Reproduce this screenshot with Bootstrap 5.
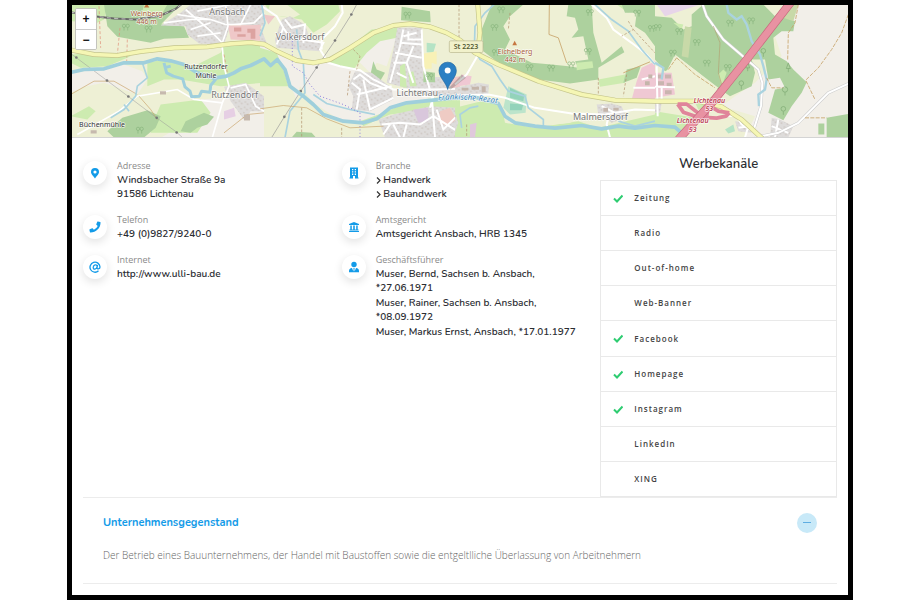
<!DOCTYPE html>
<html lang="de">
<head>
<meta charset="utf-8">
<meta name="viewport" content="width=device-width, initial-scale=1">
<title>Firmenprofil</title>
<link href="https://cdn.jsdelivr.net/npm/bootstrap@5.3.0/dist/css/bootstrap.min.css" rel="stylesheet">
<style>
body{font-family:"Open Sans","Noto Sans",sans-serif;color:#2b2d32;background:#fff}
.frame{max-width:786px;min-height:100vh;border:5px solid #000;background:#fff}
.map-box{height:133px;border-bottom:1px solid #d4d4d4}
.map-box svg.map-art{width:100%;height:100%}
.zoom-box{top:3px;left:3px;border:1px solid #c4c4bd;border-radius:2px;background:#fff}
.zoom-box button{width:20px;height:20px;border:0;background:#fff;font:700 12px/20px "Liberation Sans",sans-serif;color:#111;padding:0}
.zoom-box button+button{border-top:1px solid #ccc}
.body-pad{padding:0 11px}
.facts{--bs-gutter-x:22px}
.fact-col{padding-top:21px}
.fact-list{gap:12px}
.fact{gap:10px}
.bubble{width:24px;height:24px;margin-top:2px;background:#fff;box-shadow:0 3px 10px rgba(0,0,0,.12)}
.bubble svg{width:12px;height:12px;fill:#139be8}
.fact dt{font-size:9px;line-height:14px;font-weight:400;color:#8a8a8a}
.fact dd{font:600 10px/14px Nunito,"Open Sans",sans-serif;margin:0 0 1px}
.fact dd:last-child{margin-bottom:0}
.fact a{color:inherit;text-decoration:none}
.chev{width:5px;height:7px;fill:none;stroke:#333;stroke-width:1.2}
.side-title{font:600 13px/18px Nunito,"Open Sans",sans-serif;margin:17px 0 7px}
.channels{--bs-list-group-border-color:#e9e9e9;--bs-list-group-border-radius:0}
.channels li{height:35px;padding:0 12px;gap:11px;font-size:8px;font-weight:600;color:#444;letter-spacing:1px}
.channels li:nth-child(4n+1){height:36px}
.channels li:last-child{height:35px}
.channels svg{width:10px;height:9px;fill:none;stroke:#2ecc71;stroke-width:2}
.purpose{border:solid #ececec;border-width:1px 0;padding:15px 20px 20px}
.purpose h2{font:700 11px/20px Nunito,"Open Sans",sans-serif;color:#139be8}
.purpose p{font-size:10px;font-weight:300;line-height:16px;color:#666;margin:14px 0 0}
.fold{width:20px;height:20px;background:#c8e9f8;color:#139be8}
.fold svg{width:8px;height:2px;fill:#5dade2}
</style>
<script src="https://cdn.jsdelivr.net/npm/bootstrap@5.3.0/dist/js/bootstrap.bundle.min.js"></script>
</head>
<body>
<main class="frame mx-auto">
<section class="map-box position-relative overflow-hidden" aria-label="Karte">
<svg class="map-art d-block" viewBox="216 15 2328 399" preserveAspectRatio="xMidYMid slice">
<defs>
<pattern id="houses" width="18" height="16" patternUnits="userSpaceOnUse" patternTransform="rotate(8)"><rect width="18" height="16" fill="#dedcdb"/><rect x="3" y="3" width="5" height="4" fill="#d0c9c4"/><rect x="11" y="8" width="5" height="5" fill="#d0c9c4"/></pattern>
<g id="tree" fill="none" stroke="#86b37c" stroke-width="2"><circle cx="-5" cy="-5" r="5"/><circle cx="6" cy="-5" r="5"/><path d="M-5 0V9M6 0V9"/></g>
</defs>
<rect x="200" y="0" width="2360" height="430" fill="#eef0d5"/>
<!-- west -->
<g transform="translate(192 0)">
<path fill="#f2efe9" d="M20 222L180 195 235 215 250 240 220 285 120 250 60 262 20 280zM400 300L600 290V415H290L350 380 400 370z"/>
<path fill="#cdebb0" d="M20 15H130L120 60 100 70 20 65zM20 165L110 160 200 170 130 200 50 205 20 190zM250 190L300 180 380 205 470 160 480 135 600 135V250L470 260 350 240 300 240 250 260zM290 315L410 300 440 340 400 400H260L275 350zM130 45L290 60 300 80 190 80z"/>
<path fill="#add19e" d="M120 15H350L290 75 360 80 375 115 300 118 260 130 160 112 130 80zM175 355L250 332 290 350 275 385 240 414H150L130 395zM350 395L365 365 420 340 450 352 430 375 400 385 380 400z"/>
<path fill="#cdebb0" d="M240 15L310 15 290 50 230 60zM75 320L95 335 70 360 20 350z"/>
<path fill="url(#houses)" d="M350 40L380 15H600V80L500 75 480 135 405 132 370 105 365 80 290 78zM480 262L545 250 600 290V335H560L540 360 500 305z"/>
<path fill="#efc8c8" d="M492 78L590 76 600 124 500 120z"/><path fill="#dca3a0" d="M510 84h22v12h-22zM550 88h24v30h-14V100h-10zM520 104h25v8h-25z"/>
<path fill="#e6cfe4" d="M480 335L510 325 515 350 480 360z"/>
<path fill="none" stroke="#fff" stroke-width="5" d="M300 70L380 60 440 60 485 75M340 45L440 60M365 30L440 95 475 130M380 90L440 70M400 110L470 100M400 35L500 15M485 15L492 80 474 133 480 200 495 260 475 310 445 414M510 75L570 70 600 40M485 75L530 75 560 15M500 265L545 255 575 320 600 335M475 310L390 300 340 270 220 290 165 335 40 405"/>
<path fill="none" stroke="#c8a36a" stroke-width="2" d="M20 285L90 245 150 245 220 285M225 290L260 330 280 360M480 400L550 345 600 340"/>
<path fill="none" stroke="#df8d76" stroke-width="2" stroke-dasharray="9 6" d="M105 20L110 145M168 85L160 165M190 120L188 190M480 165L492 230"/>
<path fill="none" stroke="#aad3df" stroke-width="5" d="M235 190L250 235 220 260 215 290 180 330 140 355M180 315L195 335"/>
<path fill="none" stroke="#999" stroke-width="1.5" d="M20 162L129 243 193 291 278 355 338 398 355 414"/>
<path fill="none" stroke="#666" stroke-width="6" d="M20 38L90 50 150 57 215 60 290 48 335 28 355 12"/><path fill="none" stroke="#eee" stroke-width="2" stroke-dasharray="12 10" d="M20 38L90 50 150 57 215 60 290 48 335 28 355 12"/>
<g fill="#777"><circle cx="37" cy="174" r="4"/><circle cx="129" cy="243" r="4"/><circle cx="193" cy="291" r="4"/><circle cx="278" cy="355" r="4"/><circle cx="338" cy="399" r="4"/></g>
<path fill="#c6b9ae" d="M288 275h18v10h-18zM80 392h18v10H80zM540 345h18v18h-18z"/>
<use href="#tree" x="185" y="84"/><use href="#tree" x="253" y="90"/><use href="#tree" x="227" y="393"/>
</g>
<!-- center -->
<g transform="translate(780 0)">
<path fill="#f2efe9" d="M0 135L70 160 120 190 200 190 300 210 360 260 500 290 510 310 400 320 340 370 240 362 160 310 120 260 110 300 60 190 0 170zM290 120L410 80V110L380 200 350 190 330 220 300 190z"/>
<path fill="#cdebb0" d="M15 15H235L240 35 200 75 160 100 125 60 60 50 25 30zM0 145L50 160 70 210 85 260 0 260zM335 90L415 85 410 115 360 125 320 160 280 210 200 190 240 165zM440 310L600 285V414H530L510 330 390 345 310 380 300 365 370 340z"/>
<path fill="#eef0d5" d="M30 15L80 15 120 45 100 55 20 45z"/>
<path fill="#add19e" d="M425 22L510 35 512 68 423 62zM340 185L350 210 375 220 360 245 330 232zM95 414L110 397 155 400 168 414z"/>
<path fill="url(#houses)" d="M65 60L90 50 135 75 150 120 185 125 180 155 50 145 45 120zM412 85L485 85 490 235 555 232 600 240V285L500 290 425 262 380 250 400 150zM285 215L335 220 395 265 400 300 330 335 275 330 280 290 265 260zM355 360L400 345 510 320 590 325 600 414H375zM0 80L20 130 0 140z"/>
<path fill="#cdebb0" d="M420 200L435 190 440 265 420 260zM445 220L460 215 470 260 450 260z"/>
<path fill="#b5e3c5" d="M500 130L528 133 520 160 500 158z"/><path fill="#f8f1b6" d="M492 162L530 155V195L515 190V208H490z"/>
<path fill="#add19e" d="M491 215L525 220V248H490z"/>
<path fill="#d9c7dc" d="M460 330L505 325V365L475 370z"/><path fill="#efcbc4" d="M540 335L570 325 590 360 560 380 535 365z"/>
<path fill="#efc8c8" d="M10 45L45 50 25 75zM565 235L600 230V275L575 270z"/>
<path fill="none" stroke="#fff" stroke-width="6" d="M5 20L50 50 70 85 90 115 190 130 180 150 205 190 240 200 300 212 340 240 400 270 520 270 600 268M245 15L248 40 225 80 185 120V150M75 60L95 85 135 75 130 130M70 85L50 135M430 90L420 140 390 250M420 130L485 135M445 95V120H485M485 90L490 200 515 290 525 414M405 160L485 175M400 190L440 190 460 250M430 110L470 100M460 140L440 190M410 220L440 235M280 240L300 225 330 250 380 270M275 250L300 270 290 330M290 285L395 260M310 240L330 330 400 295M365 375L420 370 480 375 520 350M370 405L390 375M400 375L420 414M440 375L430 414M530 330L550 390 600 340M520 350L600 400M485 290L520 290 510 325"/>
<path fill="none" stroke="#aad3df" stroke-width="5" d="M5 15L15 70 0 110M110 90L115 150 130 190 135 280 90 335 75 414M160 285L200 312 270 330 320 340 345 345"/>
<path fill="none" stroke="#8f80df" stroke-width="3" stroke-dasharray="3 7" d="M97 125V200L130 220 150 255 180 290 250 315 300 340V414"/>
<path fill="none" stroke="#c8a36a" stroke-width="2" d="M0 328L70 318 140 325 200 358 270 385 370 380"/>
<path fill="none" stroke="#b0906a" stroke-width="2" stroke-dasharray="8 5" d="M125 325V414M245 385V414M280 150L300 170 290 210M270 215L262 290"/>
<path fill="none" stroke="#999" stroke-width="2" d="M290 15L274 45 225 123 170 204 122 275 73 352 35 414"/>
<g fill="#777"><circle cx="274" cy="45" r="4"/><circle cx="225" cy="123" r="4"/><circle cx="170" cy="204" r="4"/><circle cx="122" cy="275" r="4"/><circle cx="73" cy="352" r="4"/></g>
<use href="#tree" x="442" y="48"/><use href="#tree" x="508" y="232"/>
</g>
<!-- east of the centre -->
<g transform="translate(1365 0)">
<path fill="#cdebb0" d="M0 325L100 300 140 320 150 370 240 385 370 365 430 385 600 345V414H0zM430 240L510 225 510 250 435 262zM485 15L525 15 520 40z"/>
<path fill="#eef0d5" d="M150 345L220 320 350 370 240 380z"/>
<path fill="#add19e" d="M110 15H205L165 50 145 80 165 120 150 150 230 190 290 195 340 200 370 205 360 185 400 180 385 110 350 115 370 90 360 55 335 50 340 15H410L415 100 440 190 500 140 508 158 430 205 430 240 345 252 250 240 130 190 85 155 80 90zM500 15H600V140L570 100 540 80 545 40 510 40zM515 210L557 200 545 235 505 250z"/>
<path fill="#cdebb0" d="M365 190L412 185 415 205 365 212z"/>
<path fill="#bce4cb" d="M145 325L160 260 215 285 212 340 165 345z"/><path fill="#93d3ba" d="M165 265L208 285 205 305 165 295zM165 312L205 315 200 332 165 332z"/>
<path fill="url(#houses)" d="M0 265L70 250 102 255 100 285 0 290zM425 315L470 312 500 320 515 355 470 370 430 345zM0 340L10 370 0 400z"/>
<path fill="#efc8d3" d="M20 225L50 230 45 255 10 260zM560 205L600 185V300H530L545 245z"/>
<path fill="#e0c8dc" d="M45 375L65 370 60 414H45z"/>
<path fill="none" stroke="#fff" stroke-width="6" d="M0 255L35 225 68 168M0 288L100 285 150 295 240 325 350 342 450 345 540 330 600 332M410 15L455 55 475 90 530 130 575 165 600 195M535 265L600 265M560 240L600 230M440 320L480 340M462 345L455 375 465 414"/>
<path fill="none" stroke="#aad3df" stroke-width="5" d="M118 15L90 40 60 80 58 150 75 180 110 200 135 240 160 275 210 290 220 325 265 360V380M420 15L470 60 520 95 560 150 600 195M20 385L15 345 45 325 70 320M490 365L540 380 600 365"/>
<path fill="none" stroke="#c8a36a" stroke-width="2.5" d="M283 15L282 105 310 115 335 190M505 220L585 187"/>
<path fill="none" stroke="#b0906a" stroke-width="2" stroke-dasharray="8 5" d="M12 15V120M520 65L535 90 500 110M535 90L600 160M515 225L505 290M430 235L430 300M165 40L160 90M35 375V414"/>
<path fill="#c4b5aa" d="M20 265h20v8H20zM50 262h22v9H50zM80 260h12v18H80zM580 225h12v12h-12zM570 245h14v12h-14zM445 325h14v12h-14zM475 325h16v8h-16z"/>
<path fill="#c67641" d="M172 137L179 124 186 137z"/>
<use href="#tree" x="138" y="32"/><use href="#tree" x="118" y="85"/><use href="#tree" x="122" y="160"/><use href="#tree" x="223" y="205"/><use href="#tree" x="288" y="207"/><use href="#tree" x="348" y="197"/><use href="#tree" x="398" y="157"/><use href="#tree" x="546" y="42"/><use href="#tree" x="404" y="40"/><use href="#tree" x="590" y="88"/>
</g>
<!-- east -->
<g transform="translate(1965 0)">
<path fill="#f2efe9" d="M415 15H600V414H270L300 350 200 320 240 290 300 250 380 170 360 110 380 90 400 95z"/>
<path fill="#e7d5e9" d="M5 15H135L30 50z"/>
<path fill="#cdebb0" d="M0 335L120 355 80 414H0z"/>
<path fill="#add19e" d="M0 50L50 55 85 90 110 80 110 45 145 15H400L380 50 420 65 415 95 380 95 355 115 360 165 395 185 415 210 455 248 440 280 410 320 385 362 340 340 360 270 390 265 375 235 340 240 330 180 290 180 300 220 290 260 225 290 210 280 180 300 190 270 130 220 65 170 60 200 30 215 0 180zM515 355L580 343V414H515zM490 372H508V405H490z"/>
<path fill="#eef0d5" d="M325 15H395L360 50zM60 165L190 265 140 300 20 290 35 215z"/>
<path fill="#c8d9a8" d="M90 80L110 85 100 175 80 170zM385 55L400 15H430L415 65z"/>
<path fill="#cdebb0" d="M190 225L205 210 215 220 200 260zM55 70L85 75 80 90zM120 310L175 290 180 330 130 330z"/>
<path fill="#efc8d3" d="M0 220L50 220 60 285 0 295z"/>
<path fill="#c9b4af" d="M5 225h14v12H5zM30 225h18v12H30zM5 245h22v12H5zM35 250h15v12H35zM30 272h20v12H30z"/>
<path fill="url(#houses)" d="M350 355L375 360 415 380 400 414H345zM240 365L275 370 290 400 250 395zM0 310H20L15 340H0z"/>
<path fill="#b5e3c5" d="M210 390L235 375 240 395 220 402z"/>
<path fill="none" stroke="#fff" stroke-width="6" d="M0 262L60 263M5 200L8 350M20 263V300M210 348L245 350 260 375 310 405M250 385L280 380 270 414M350 380L400 400M370 360L360 414"/>
<path fill="none" stroke="#ccc" stroke-width="9" d="M143 15L155 50 205 120 275 180 310 210 322 250 318 320 298 385M300 414L370 400 430 370 480 320 520 280 590 248"/>
<path fill="none" stroke="#fff" stroke-width="6" d="M143 15L155 50 205 120 275 180 310 210 322 250 318 320 298 385M300 414L370 400 430 370 480 320 520 280 590 248"/>
<path fill="none" stroke="#aad3df" stroke-width="7" d="M215 15L220 40 245 60 260 50 275 75 290 125 315 165 325 200 335 240 330 270 310 285 312 320M0 190L25 205 20 240"/>
<path fill="none" stroke="#c8a36a" stroke-width="2.5" stroke-dasharray="12 4" d="M430 15L420 70 400 100 398 180M580 45L560 100 530 150 490 205 452 242 480 300M65 175L120 225 180 265M335 235L350 265 385 265M450 355H515M40 210L65 175"/>
<path fill="none" stroke="#b2a173" stroke-width="2" d="M175 80L195 130 190 220 200 255 180 295"/>
<use href="#tree" x="8" y="85"/><use href="#tree" x="72" y="97"/><use href="#tree" x="125" y="130"/><use href="#tree" x="53" y="162"/><use href="#tree" x="155" y="192"/><use href="#tree" x="218" y="205"/><use href="#tree" x="288" y="65"/><use href="#tree" x="225" y="72"/>
<g fill="none" stroke="#7ba871" stroke-width="2"><path d="M325 161V172M400 207V218M259 259V270M390 278V288M385 336V346M278 205V215"/><circle cx="325" cy="154" r="7"/><path d="M400 190L394 207H406zM278 188L272 205H284z"/><circle cx="259" cy="251" r="7"/><circle cx="390" cy="270" r="8"/><circle cx="385" cy="328" r="7"/></g>
</g>
<!-- rivers and main roads -->
<g fill="none" stroke="#9fcfdc" stroke-width="11" stroke-linejoin="round">
<path d="M212 219L252 210 312 208 372 190 432 190 472 178 512 184 552 195 592 220 642 236 680 230 702 220 722 208 752 198 792 178 812 198 832 180 855 210 870 260 910 290 940 315 970 345 1030 365 1090 370 1130 358 1170 325 1220 310 1300 302 1365 295 1420 292 1495 312 1515 350 1545 370 1605 380 1665 386 1745 378 1805 388 1855 380 1905 386 1965 378 2025 383 2050 405"/>
<path stroke-width="9" d="M492 190L500 220 520 230 548 238 555 262 570 275 575 292 598 290 605 275 630 278 632 258 648 238M492 205L512 200"/>
</g>
<g fill="none" stroke-linejoin="round">
<path stroke="#c5c58b" stroke-width="15" d="M210 151L282 165 352 168 422 156 522 145 622 142 692 133 752 129 792 134 830 155 890 183 940 190 990 180 1050 145 1120 100 1180 78 1230 73 1290 82 1340 100 1380 122 1425 160 1495 195 1615 245 1745 285 1845 302 1965 305 2095 305 2165 322 2225 360 2290 420M1433 12L1440 100 1433 160"/>
<path stroke="#f5f6b4" stroke-width="11" d="M210 151L282 165 352 168 422 156 522 145 622 142 692 133 752 129 792 134 830 155 890 183 940 190 990 180 1050 145 1120 100 1180 78 1230 73 1290 82 1340 100 1380 122 1425 160 1495 195 1615 245 1745 285 1845 302 1965 305 2095 305 2165 322 2225 360 2290 420M1433 12L1440 100 1433 160"/>
<path stroke="#e0849a" stroke-width="11" d="M2033 314L2050 338 2090 352 2150 356 2178 350 2188 340M2033 314H2060L2100 345M2125 320L2120 350M2130 320L2155 335 2188 340"/>
<path stroke="#c76a7e" stroke-width="25" d="M2375 5L2240 180 2140 305 2035 420"/><path stroke="#e892a2" stroke-width="21" d="M2375 5L2240 180 2140 305 2035 420"/>
</g>
<g font-family="'Noto Sans',sans-serif" text-anchor="middle" paint-order="stroke" stroke="#fff" stroke-opacity=".75" stroke-width="4" stroke-linejoin="round">
<g font-size="27" fill="#777"><text x="682" y="45">Ansbach</text><text x="900" y="121">Volkersdorf</text><text x="704" y="295">Rutzendorf</text><text x="1252" y="290">Lichtenau</text><text x="1801" y="360">Malmersdorf</text></g>
<g font-size="21" fill="#333"><text x="618" y="209">Rutzendorfer</text><text x="618" y="236">Mühle</text><text x="306" y="382">Büchenmühle</text></g>
<g font-size="21" fill="#a85c38"><text x="440" y="49">Weinberg</text><text x="440" y="73">446 m</text><text x="1545" y="162">Eichelberg</text><text x="1545" y="186">442 m</text></g>
<g font-size="21" font-style="italic" font-weight="600" fill="#bd3f55"><text x="2128" y="310">Lichtenau</text><text x="2128" y="334">53</text><text x="2078" y="371">Lichtenau</text><text x="2078" y="396">53</text></g>
<path id="riverline" d="M1315 302Q1410 294 1535 320" fill="none" stroke="none"/>
<text font-size="24" font-style="italic" fill="#3e86bb" text-anchor="start"><textPath href="#riverline">Fränkische Rezat</textPath></text>
</g>
<path fill="#c67641" d="M432 24L440 12 448 24z"/>
<rect x="1348" y="124" width="101" height="35" rx="4" fill="#f1f1cb" stroke="#b8b68e" stroke-width="2"/>
<text x="1398" y="149" font-family="'Noto Sans',sans-serif" font-size="21" font-weight="600" fill="#555b35" text-anchor="middle">St 2223</text>
<path d="M1345 267L1385 225 1398 235 1352 270z" fill="#333" opacity=".25"/>
<path d="M1343 270C1338 248 1317 234 1317 213A26 25 0 0 1 1369 213C1369 234 1348 248 1343 270z" fill="#2b7fc3" stroke="#1f659f" stroke-width="2"/><circle cx="1343" cy="213" r="9" fill="#fff"/>
</svg>
<div class="zoom-box position-absolute d-flex flex-column overflow-hidden"><button type="button" aria-label="Vergrößern">+</button><button type="button" aria-label="Verkleinern">−</button></div>
</section>

<div class="body-pad">
<div class="row facts">
<div class="col-4 fact-col"><div class="fact-list d-flex flex-column">
<div class="fact d-flex align-items-start"><span class="bubble rounded-circle d-flex align-items-center justify-content-center flex-shrink-0"><svg viewBox="0 0 12 12"><path fill-rule="evenodd" d="M6 1a4 4 0 0 0-4 4c0 2 1.500 3 4 6.500C8.500 8 10 7 10 5a4 4 0 0 0-4-4zm0 2.400a1.600 1.600 0 1 1 0 3.200 1.600 1.600 0 0 1 0-3.200z"/></svg></span><dl class="mb-0"><dt>Adresse</dt><dd>Windsbacher Straße 9a<br>91586 Lichtenau</dd></dl></div>
<div class="fact d-flex align-items-start"><span class="bubble rounded-circle d-flex align-items-center justify-content-center flex-shrink-0"><svg viewBox="-20 -20 552 552"><path d="M493 25l-104-24c-11-3-23 3-27 14l-48 112c-4 10-1 21 7 28l61 50a371 371 0 0 1-177 177l-50-61c-7-8-18-11-28-7L15 362c-11 4-17 16-14 27l24 104c3 11 12 19 24 19 256 0 463-207 463-463 0-12-8-22-19-24z"/></svg></span><dl class="mb-0"><dt>Telefon</dt><dd>+49 (0)9827/9240-0</dd></dl></div>
<div class="fact d-flex align-items-start"><span class="bubble rounded-circle d-flex align-items-center justify-content-center flex-shrink-0"><svg viewBox="0 0 12 12"><path d="M9.500 9.800A5 5 0 1 1 11 6c0 2.300-3 2.500-3 .8l.5-3M8 6c-.4 2.500-3.800 3-3.800.6C4.200 3.500 7.700 3 8 5.200" fill="none" stroke="#139be8" stroke-width="1.300"/></svg></span><dl class="mb-0"><dt>Internet</dt><dd><a href="http://www.ulli-bau.de">http://www.ulli-bau.de</a></dd></dl></div>
</div></div>

<div class="col-4 fact-col"><div class="fact-list d-flex flex-column">
<div class="fact d-flex align-items-start"><span class="bubble rounded-circle d-flex align-items-center justify-content-center flex-shrink-0"><svg viewBox="0 0 12 12"><path fill-rule="evenodd" d="M2 .5h8v10h.5v1H7V9H5v2.500H1.500v-1H2zM4 2v1.300h1.300V2zm2.700 0v1.300H8V2zM4 4.300v1.300h1.300V4.300zm2.700 0v1.300H8V4.300zM4 6.600v1.300h1.300V6.600zm2.700 0v1.300H8V6.600z"/></svg></span><dl class="mb-0"><dt>Branche</dt><dd><svg class="chev" viewBox="0 0 5 7"><path d="M1 .5l3 3-3 3"/></svg> Handwerk<br><svg class="chev" viewBox="0 0 5 7"><path d="M1 .5l3 3-3 3"/></svg> Bauhandwerk</dd></dl></div>
<div class="fact d-flex align-items-start"><span class="bubble rounded-circle d-flex align-items-center justify-content-center flex-shrink-0"><svg viewBox="0 0 12 12"><path d="M6 1l5 2v1H1V3zM2.300 4.500h1.500v4h1.400v-4h1.600v4h1.400v-4h1.500v4h.8v1H1.500v-1h.8zM1 10h10v1H1z"/></svg></span><dl class="mb-0"><dt>Amtsgericht</dt><dd>Amtsgericht Ansbach, HRB 1345</dd></dl></div>
<div class="fact d-flex align-items-start"><span class="bubble rounded-circle d-flex align-items-center justify-content-center flex-shrink-0"><svg viewBox="0 0 12 12"><circle cx="6" cy="3.500" r="2.700"/><path d="M4 7l1.400 3.500L5.600 8 5.300 7h1.400l-.3 1 .2 2.500L8 7c2 .2 3 1.200 3 3v1.200H1V10c0-1.800 1-2.800 3-3z"/></svg></span><dl class="mb-0"><dt>Geschäftsführer</dt><dd>Muser, Bernd, Sachsen b. Ansbach,<br>*27.06.1971</dd><dd>Muser, Rainer, Sachsen b. Ansbach,<br>*08.09.1972</dd><dd class="text-nowrap">Muser, Markus Ernst, Ansbach, *17.01.1977</dd></dl></div>
</div></div>

<div class="col-4">
<h2 class="side-title text-center">Werbekanäle</h2>
<ul class="list-group channels">
<li class="list-group-item d-flex align-items-center"><svg viewBox="0 0 10 9"><path d="M1 4.500l3 3 5.500-6"/></svg>Zeitung</li>
<li class="list-group-item d-flex align-items-center"><svg></svg>Radio</li>
<li class="list-group-item d-flex align-items-center"><svg></svg>Out-of-home</li>
<li class="list-group-item d-flex align-items-center"><svg></svg>Web-Banner</li>
<li class="list-group-item d-flex align-items-center"><svg viewBox="0 0 10 9"><path d="M1 4.500l3 3 5.500-6"/></svg>Facebook</li>
<li class="list-group-item d-flex align-items-center"><svg viewBox="0 0 10 9"><path d="M1 4.500l3 3 5.500-6"/></svg>Homepage</li>
<li class="list-group-item d-flex align-items-center"><svg viewBox="0 0 10 9"><path d="M1 4.500l3 3 5.500-6"/></svg>Instagram</li>
<li class="list-group-item d-flex align-items-center"><svg></svg>LinkedIn</li>
<li class="list-group-item d-flex align-items-center"><svg></svg>XING</li>
</ul>
</div>
</div>

<section class="purpose">
<div class="d-flex justify-content-between align-items-center"><h2 class="mb-0">Unternehmensgegenstand</h2>
<button class="fold btn rounded-circle p-0 border-0 d-flex align-items-center justify-content-center" type="button" data-bs-toggle="collapse" data-bs-target="#purpose-text" aria-expanded="true" aria-controls="purpose-text" aria-label="Zuklappen"><svg viewBox="0 0 8 2"><rect width="8" height="1"/></svg></button></div>
<div class="collapse show" id="purpose-text"><p>Der Betrieb eines Bauunternehmens, der Handel mit Baustoffen sowie die entgeltlliche Überlassung von Arbeitnehmern</p></div>
</section>
</div>
</main>
</body>
</html>
